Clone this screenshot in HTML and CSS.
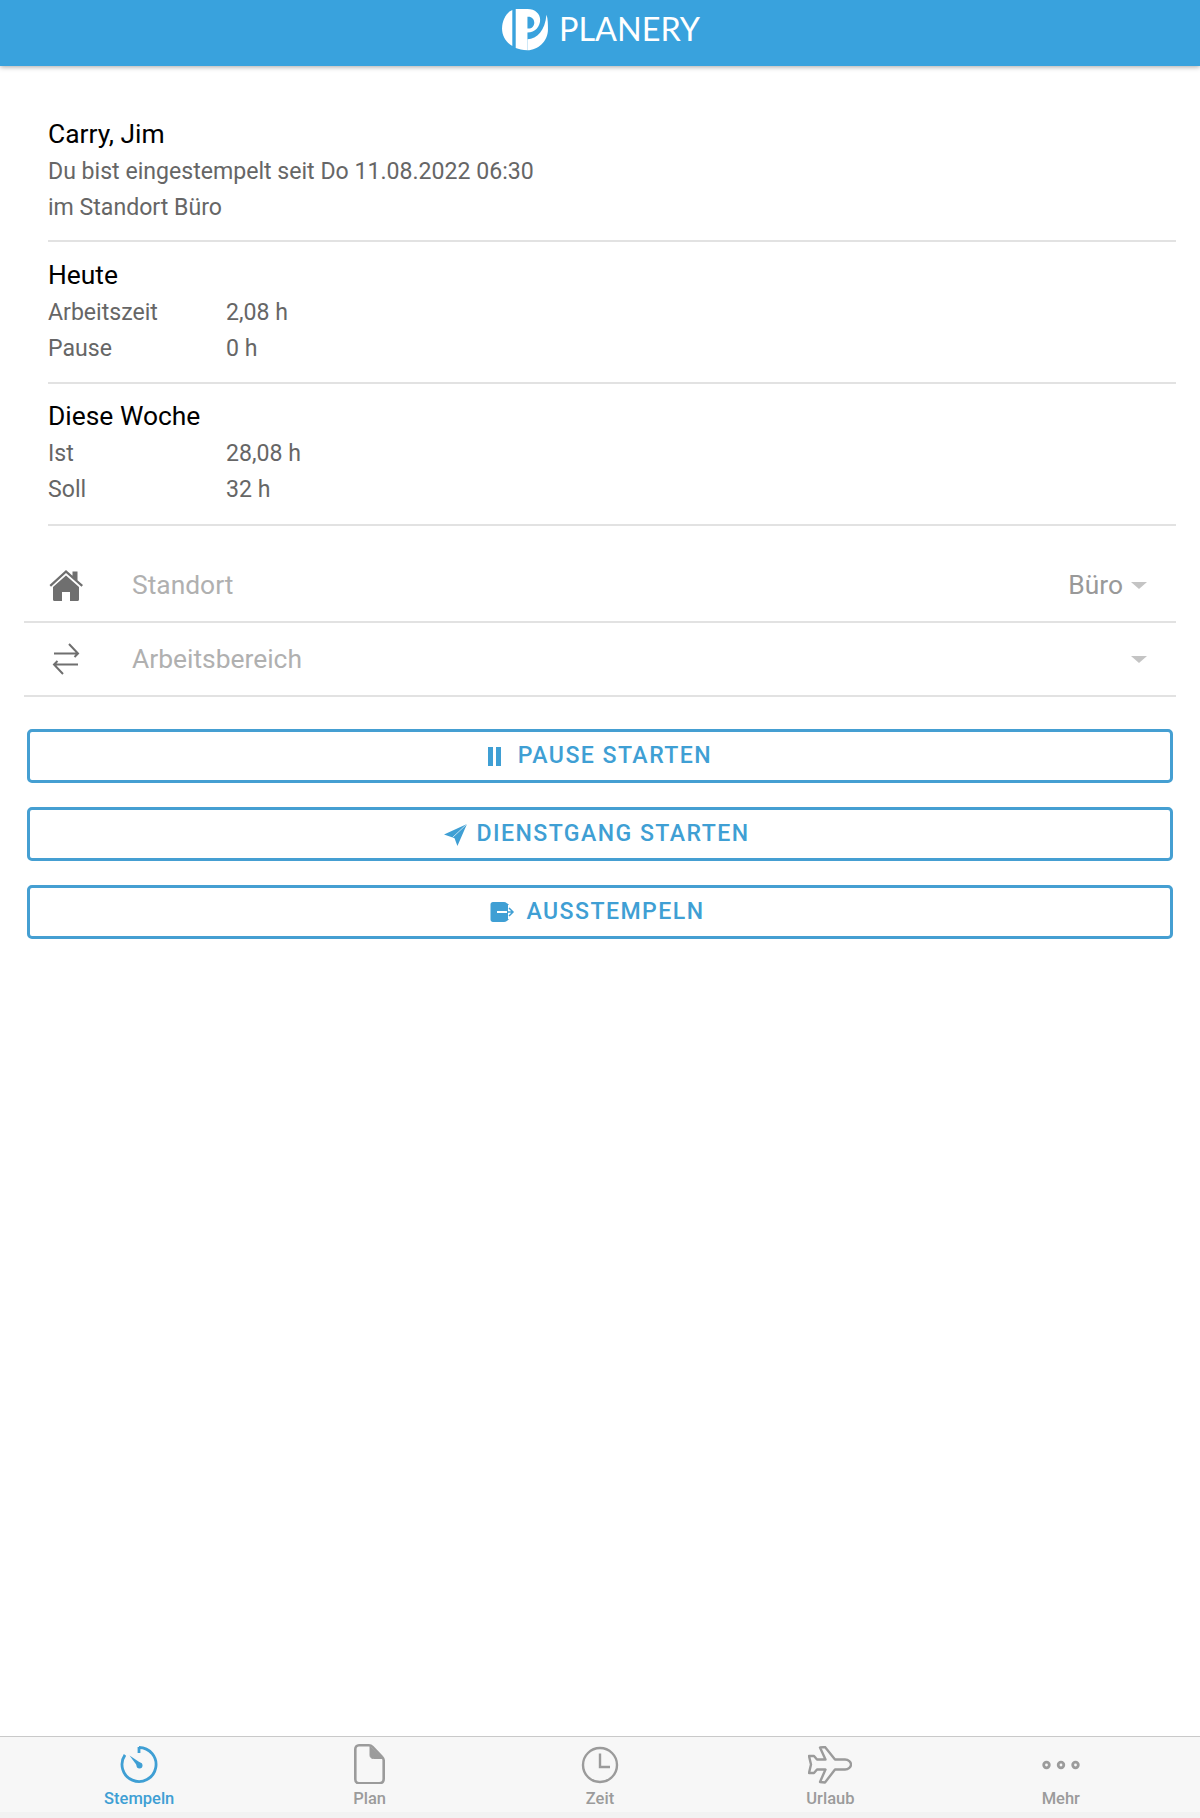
FILE: index.html
```html
<!DOCTYPE html>
<html lang="de">
<head>
    <meta charset="UTF-8">
    <meta name="viewport" content="width=device-width, initial-scale=1.0">
    <title>Planery</title>
    <link rel="stylesheet" href="styles.css">
</head>
<body>
    <header class="top-bar">
        <svg class="logo" viewBox="0 0 47 43" width="46" height="42">
            <path d="M10.500 1C4 4 0 12 0 20c0 8 4 14 10.500 18z" fill="#fff"/>
            <path fill-rule="evenodd" d="M14 0h12c8 0 13 5 13 11 0 7-5 13-13 13v18.300c-5 0-9-1.300-12-2.300zM26 8h1c3.500 0 6 2.500 6 6s-2.500 6-6 6h-1z" fill="#fff"/>
            <path d="M26 31c10 0 18-9 19.500-25 1.500 4 1.500 10 1.500 15 0 12-10 21-21 21.300z" fill="#fff"/>
        </svg>
        <span class="brand">PLANERY</span>
    </header>

    <main class="content">
        <section class="info-block first">
            <h2>Carry, Jim</h2>
            <p>Du bist eingestempelt seit Do 11.08.2022 06:30</p>
            <p>im Standort Büro</p>
        </section>
        <section class="info-block">
            <h2>Heute</h2>
            <div class="info-row"><span>Arbeitszeit</span><span>2,08 h</span></div>
            <div class="info-row"><span>Pause</span><span>0 h</span></div>
        </section>
        <section class="info-block week">
            <h2>Diese Woche</h2>
            <div class="info-row"><span>Ist</span><span>28,08 h</span></div>
            <div class="info-row"><span>Soll</span><span>32 h</span></div>
        </section>

        <div class="select-list">
            <div class="select-row">
                <svg class="select-icon" viewBox="0 0 36 36" width="36" height="36">
                    <path d="M18 3l6.500 5.700V4.500h5v8.700l5.500 4.900-1.500 1.700L18 6 3 19.800l-1.500-1.700z" fill="#6f6f6f"/>
                    <path d="M18 8.500L5 20v12.500c0 .9.600 1.500 1.400 1.500H14v-9h8v9h7.600c.8 0 1.400-.6 1.400-1.500V20z" fill="#6f6f6f"/>
                </svg>
                <span class="select-label">Standort</span>
                <span class="select-value">Büro</span>
                <span class="caret"></span>
            </div>
            <div class="select-row">
                <svg class="select-icon" viewBox="0 0 36 36" width="36" height="36" fill="none" stroke="#6f6f6f" stroke-width="2">
                    <path d="M6 12.500h24M21 3l9 9.500-3.500 3.500"/>
                    <path d="M30 23.500H6M15 33l-9-9.500L9.500 20"/>
                </svg>
                <span class="select-label">Arbeitsbereich</span>
                <span class="caret"></span>
            </div>
        </div>

        <div class="actions">
            <button class="action-btn">
                <svg class="icon-pause" viewBox="0 0 13 19" width="13" height="19"><path d="M0 0h5v19H0zM8 0h5v19H8z" fill="#3f9fd4"/></svg>
                <span>PAUSE STARTEN</span>
            </button>
            <button class="action-btn shifted">
                <svg class="icon-plane" viewBox="0 0 24 24" width="23" height="23"><path d="M24 1L0 12l9 3 2 1 3 8z" fill="#3f9fd4"/><path d="M24 1L9 15" stroke="#fff" stroke-width=".7"/></svg>
                <span>DIENSTGANG STARTEN</span>
            </button>
            <button class="action-btn shifted">
                <svg class="icon-out" viewBox="0 0 25 22" width="25" height="22">
                    <path d="M3 1h11c2 0 4 2 5 3H7v14h12c-1 1-3 3-5 3H3c-1.500 0-2.500-1-2.500-2.500v-15C.5 2 1.500 1 3 1z" fill="#3f9fd4"/>
                    <path d="M2 4h16v14H2z" fill="#3f9fd4"/>
                    <path d="M8 11h15M19 7l4 4-4 4" fill="none" stroke="#3f9fd4" stroke-width="1.500"/>
                    <path d="M7 10h10v2H7z" fill="#fff"/>
                </svg>
                <span>AUSSTEMPELN</span>
            </button>
        </div>
    </main>

    <nav class="tab-bar">
        <a class="tab active">
            <svg viewBox="0 0 38 38" width="38" height="38" fill="none" stroke="#3f9fd4" stroke-width="2.800">
                <path d="M19 1.500a17 17 0 1 1-14 7.400"/>
                <path d="M19 1v6"/>
                <path d="M9.500 9.500l12 8-3.500 3.500z" fill="#3f9fd4" stroke="none"/>
                <circle cx="19.500" cy="19.500" r="3" fill="#3f9fd4" stroke="none"/>
            </svg>
            <span>Stempeln</span>
        </a>
        <a class="tab">
            <svg class="icon-plan" viewBox="0 0 31 40" width="31" height="40" fill="none" stroke="#9b9b9b" stroke-width="2.600" stroke-linejoin="round">
                <path d="M5 1.300h10c1.500 0 2.500.5 3.500 1.500l9.500 10c1 1 1.700 2 1.700 3.500v18.400c0 2.800-1.700 4.500-4.500 4.500H5c-2.300 0-3.700-1.700-3.700-4V5.300c0-2.300 1.400-4 3.700-4z"/>
                <path d="M16 2v9c0 2 1 3.500 3.500 3.500H29" fill="#9b9b9b" stroke-width="1"/>
            </svg>
            <span>Plan</span>
        </a>
        <a class="tab">
            <svg viewBox="0 0 38 38" width="38" height="38" fill="none" stroke="#9b9b9b" stroke-width="2.400">
                <circle cx="19" cy="19" r="17"/>
                <path d="M19 7.500v13.500h10"/>
            </svg>
            <span>Zeit</span>
        </a>
        <a class="tab">
            <svg viewBox="0 0 44 38" width="44" height="38" fill="none" stroke="#9b9b9b" stroke-width="2.400" stroke-linejoin="round">
                <path d="M12 1.500l5-.5 10 12.500h10c3.500 0 6 2.500 6 5s-2.500 5-6 5H27L17 36.500l-5-.5 5.500-12.500H9l-3 3.500H1l2-8.500-2-8.500h5l3 3.500h8.500z"/>
            </svg>
            <span>Urlaub</span>
        </a>
        <a class="tab">
            <svg class="icon-dots" viewBox="0 0 38 10" width="38" height="10" fill="none" stroke="#9b9b9b" stroke-width="2.800">
                <circle cx="4.500" cy="5" r="2.800"/><circle cx="19" cy="5" r="2.800"/><circle cx="33.500" cy="5" r="2.800"/>
            </svg>
            <span>Mehr</span>
        </a>
    </nav>
</body>
</html>
```

FILE: styles.css
```css
html, body {
    height: 100%;
}

body {
    font-family: Roboto, sans-serif;
    margin: 0;
    background-color: #fff;
    display: flex;
    flex-direction: column;
    color: #666;
}

.top-bar {
    height: 66px;
    background-color: #39a2dd;
    box-shadow: 0 1px 5px rgba(0, 0, 0, 0.35);
    color: #fff;
    display: flex;
    justify-content: center;
    align-items: flex-start;
    gap: 11px;
    flex-shrink: 0;
    padding-left: 2px;
}

.logo {
    margin-top: 9px;
}

.brand {
    font-family: Lato, sans-serif;
    font-size: 32.400px;
    font-weight: 400;
    line-height: 57px;
}

.content {
    flex: 1;
    padding: 49px 24px 0 24px;
}

.info-block {
    margin-left: 24px;
    padding: 14px 0 15px;
    border-bottom: 2px solid #e2e2e2;
    font-size: 23.100px;
    line-height: 36px;
}

.info-block.first {
    padding-top: 0;
    padding-bottom: 14px;
}

.info-block.week {
    padding-top: 13px;
    padding-bottom: 16px;
}

.info-block h2 {
    font-size: 26.400px;
    line-height: 39px;
    font-weight: 400;
    color: #000;
    margin: 0;
}

.info-block p {
    margin: 0;
}

.info-row {
    display: flex;
}

.info-row span:first-child {
    width: 178px;
}

.select-list {
    margin-top: 23px;
}

.select-row {
    height: 72px;
    border-bottom: 2px solid #e2e2e2;
    display: flex;
    align-items: center;
    font-size: 26.400px;
}

.select-icon {
    margin-left: 24px;
    margin-right: 48px;
}

.select-label {
    flex: 1;
    color: #b0b0b0;
}

.select-value {
    color: #999;
    margin-right: 8px;
}

.caret {
    width: 0;
    height: 0;
    border-left: 8px solid transparent;
    border-right: 8px solid transparent;
    border-top: 7px solid #c4c4c4;
    margin-right: 29px;
}

.actions {
    margin-top: 32px;
    padding: 0 3px;
    display: flex;
    flex-direction: column;
    gap: 24px;
}

.action-btn {
    height: 54px;
    border: 3px solid #459fd2;
    border-radius: 5px;
    background-color: #fff;
    color: #3f9fd4;
    font-family: Roboto, sans-serif;
    font-size: 23.100px;
    font-weight: 500;
    letter-spacing: 1.440px;
    display: flex;
    align-items: center;
    justify-content: center;
    padding: 0;
}

.action-btn span {
    margin-bottom: 2px;
}

.action-btn.shifted {
    padding-right: 6px;
}

.icon-pause {
    margin-right: 17px;
}

.icon-plane {
    margin-right: 9px;
}

.icon-out {
    margin-right: 12px;
}

.tab-bar {
    height: 75px;
    border-top: 1px solid #c9c9c9;
    border-bottom: 6px solid #f2f2f2;
    background-color: #f7f7f7;
    display: flex;
    flex-shrink: 0;
    padding: 0 24px;
}

.tab {
    flex: 1;
    display: flex;
    flex-direction: column;
    align-items: center;
    justify-content: flex-end;
    color: #9b9b9b;
    font-size: 16.500px;
    font-weight: 500;
    position: relative;
    height: 71px;
}

.tab svg {
    position: absolute;
    top: 9px;
}

.tab svg.icon-plan {
    top: 7px;
}

.tab svg.icon-dots {
    top: 23px;
}

.tab.active {
    color: #3f9fd4;
}
```
